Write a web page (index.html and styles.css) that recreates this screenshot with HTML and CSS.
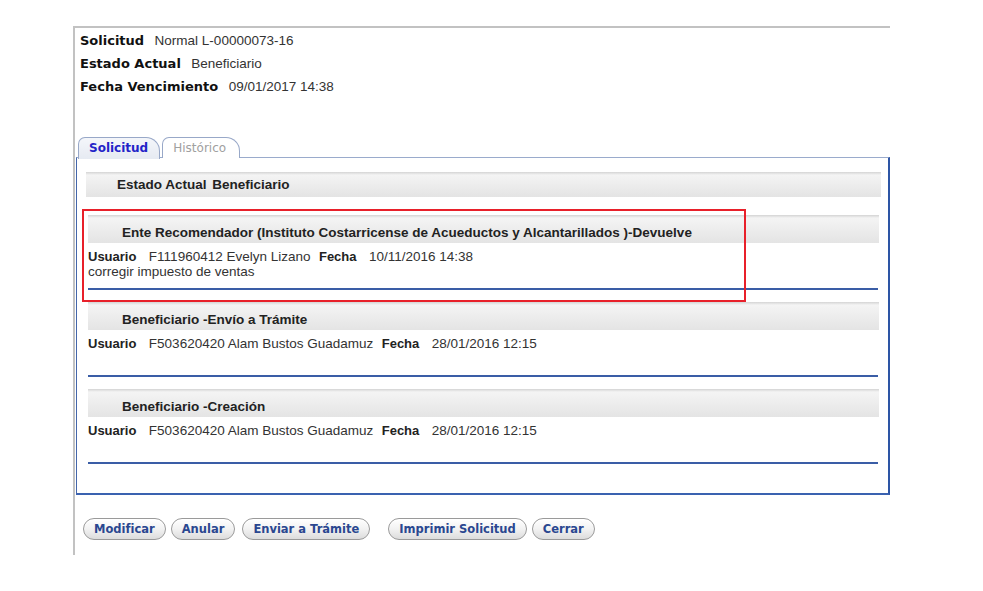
FILE: index.html
```html
<!DOCTYPE html>
<html lang="es">
<head>
    <meta charset="UTF-8">
    <title>Solicitud L-00000073-16</title>
    <link rel="stylesheet" href="styles.css">
</head>
<body>
    <div class="page">
        <!-- datos generales -->
        <div class="summary">
            <div class="summary-row"><span class="label">Solicitud</span> <span class="value">Normal L-00000073-16</span></div>
            <div class="summary-row"><span class="label">Estado Actual</span> <span class="value">Beneficiario</span></div>
            <div class="summary-row"><span class="label">Fecha Vencimiento</span> <span class="value">09/01/2017 14:38</span></div>
        </div>

        <!-- pestañas -->
        <div class="tabs">
            <div class="tab tab-active">Solicitud</div>
            <div class="tab">Histórico</div>
        </div>

        <div class="panel">
            <div class="bar bar-state"><span class="bar-label">Estado Actual</span> Beneficiario</div>

            <div class="entry">
                <div class="mark"></div>
                <div class="bar bar-entry">Ente Recomendador (Instituto Costarricense de Acueductos y Alcantarillados )-Devuelve</div>
                <div class="entry-body">
                    <div class="entry-row"><span class="field">Usuario</span> <span class="data">F111960412 Evelyn Lizano</span> <span class="field">Fecha</span> <span class="data">10/11/2016 14:38</span></div>
                    <div class="entry-row data">corregir impuesto de ventas</div>
                </div>
            </div>

            <div class="entry">
                <div class="bar bar-entry">Beneficiario -Envío a Trámite</div>
                <div class="entry-body">
                    <div class="entry-row"><span class="field">Usuario</span> <span class="data">F503620420 Alam Bustos Guadamuz</span> <span class="field">Fecha</span> <span class="data">28/01/2016 12:15</span></div>
                </div>
            </div>

            <div class="entry">
                <div class="bar bar-entry">Beneficiario -Creación</div>
                <div class="entry-body">
                    <div class="entry-row"><span class="field">Usuario</span> <span class="data">F503620420 Alam Bustos Guadamuz</span> <span class="field">Fecha</span> <span class="data">28/01/2016 12:15</span></div>
                </div>
            </div>
        </div>

        <!-- acciones -->
        <div class="actions">
            <button class="btn">Modificar</button>
            <button class="btn">Anular</button>
            <button class="btn btn-spaced">Enviar a Trámite</button>
            <button class="btn btn-wide-gap">Imprimir Solicitud</button>
            <button class="btn">Cerrar</button>
        </div>
    </div>
</body>
</html>
```

FILE: styles.css
```css
body {
    margin: 0;
    background-color: #ffffff;
    font-family: "Liberation Sans", Arial, sans-serif;
    color: #222;
}
.page {
    margin: 26px 0 0 73px;
    width: 817px;
    height: 529px;
    border-top: 2px solid #c2c2c2;
    border-left: 2px solid #c2c2c2;
    box-sizing: border-box;
}
.summary {
    padding-left: 5px;
}
.summary-row {
    line-height: 23px;
    height: 23px;
}
.label {
    font-family: "DejaVu Sans", Verdana, sans-serif;
    font-weight: bold;
    font-size: 13px;
    color: #111;
}
.value {
    font-size: 13.5px;
    color: #333;
    margin-left: 6px;
}
.tabs {
    display: flex;
    gap: 2px;
    margin: 40px 0 0 3px;
    height: 21px;
    position: relative;
    z-index: 1;
}
.tab {
    font-family: "DejaVu Sans", Verdana, sans-serif;
    font-size: 12px;
    color: #a0a0a0;
    padding: 0 13px 0 10px;
    line-height: 20px;
    border: 1px solid #98a8c8;
    border-bottom: none;
    border-radius: 7px 14px 0 0;
    background: #ffffff;
}
.tab-active {
    color: #2323c8;
    font-weight: bold;
    background: linear-gradient(#f4f6fa, #e6eaf2);
    padding: 0 11px 0 10px;
    height: 21px;
}
.panel {
    margin: -1px 0 0 1px;
    width: 814px;
    box-sizing: border-box;
    border: 1px solid #9aabcc;
    border-left-color: #4466aa;
    border-right: 2px solid #2d55a5;
    border-bottom: 2px solid #3a62b0;
    padding: 14px 0 17px;
}
.bar {
    background: linear-gradient(#d4d4d4 0, #f4f4f4 3px, #ececec 55%, #e4e4e4 100%);
    font-weight: bold;
    font-size: 13.5px;
    color: #222;
    box-sizing: border-box;
}
.bar-state {
    margin: 0 7px 18px 9px;
    height: 25px;
    line-height: 16px;
    padding: 5px 0 0 31px;
}
.bar-label {
    margin-right: 2px;
}
.entry {
    position: relative;
    margin: 0 9px 12px 11px;
}
.bar-entry {
    height: 28px;
    line-height: 16px;
    padding: 10px 0 0 34px;
}
.entry-body {
    height: 47px;
    padding-top: 5px;
    box-sizing: border-box;
    border-bottom: 2px solid #3a5da6;
    margin-right: 1px;
}
.entry-row {
    line-height: 16px;
    height: 16px;
}
.field {
    font-weight: bold;
    font-size: 13px;
    color: #222;
}
.data {
    font-size: 13.5px;
    color: #333;
    margin: 0 4px 0 6px;
}
.field + .data {
    margin-left: 8px;
}
.entry-row.data {
    margin: 0;
}
.mark {
    position: absolute;
    left: -6px;
    top: -6px;
    width: 664px;
    height: 93px;
    border: 2px solid #e8202a;
    box-sizing: border-box;
    pointer-events: none;
}
.actions {
    display: flex;
    align-items: center;
    margin: 23px 0 0 8px;
    gap: 5px;
}
.btn {
    font-family: "DejaVu Sans", Verdana, sans-serif;
    font-weight: bold;
    font-size: 11.5px;
    color: #2a4790;
    height: 22px;
    padding: 0 10px;
    border: 1px solid #9a9a9a;
    border-radius: 11px;
    background: linear-gradient(#ffffff, #f2f2f2 50%, #dcdcdc);
    box-shadow: inset 0 1px 0 #fff;
    cursor: pointer;
}
.btn-spaced {
    margin-left: 2px;
}
.btn-wide-gap {
    margin-left: 13px;
}
```
